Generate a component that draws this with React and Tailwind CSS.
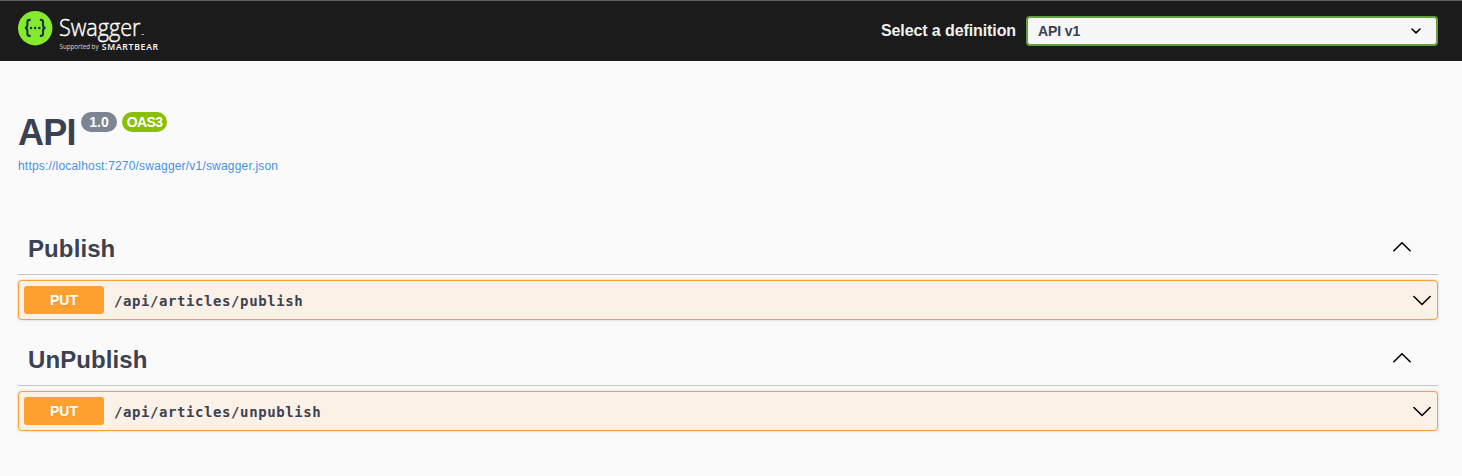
const groups = [
  { name: 'Publish', method: 'PUT', path: '/api/articles/publish' },
  { name: 'UnPublish', method: 'PUT', path: '/api/articles/unpublish' },
];

function Logo() {
  return (
    <svg width="150" height="44" viewBox="0 0 150 44" className="block">
      <circle cx="17.2" cy="18.2" r="17.2" fill="#85ea2d" />
      <g fill="none" stroke="#173647" strokeWidth="2.1">
        <path d="M12.6 9.9h-1q-2.2 0-2.2 2.2v3q0 2.6-2.4 2.8q2.4.2 2.4 2.8v3q0 2.2 2.2 2.2h1" />
        <path d="M21.8 9.9h1q2.2 0 2.2 2.2v3q0 2.6 2.4 2.8q-2.4.2-2.4 2.8v3q0 2.2-2.2 2.2h-1" />
      </g>
      <g fill="#173647">
        <circle cx="13" cy="17.9" r="1.25" />
        <circle cx="17.2" cy="17.9" r="1.25" />
        <circle cx="21.4" cy="17.9" r="1.25" />
      </g>
      <g fill="#fff" fontFamily="'Open Sans', sans-serif">
        <text x="41" y="25.8" fontSize="23" fontWeight="300" stroke="#fff" strokeWidth="0.4" textLength="81.5" lengthAdjust="spacingAndGlyphs">Swagger</text>
        <text x="41.5" y="39.4" fontSize="6.8" fill="#ddd" textLength="39" lengthAdjust="spacingAndGlyphs">Supported by</text>
        <text x="83.8" y="39.5" fontSize="8.6" fontWeight="600" textLength="57" lengthAdjust="spacingAndGlyphs" letterSpacing="0.7">SMARTBEAR</text>
      </g>
      <path d="M123.5 24.5h2.5" stroke="#aaa" strokeWidth="1" />
    </svg>
  );
}

function Chevron({ up }) {
  return (
    <svg width="20" height="20" viewBox="0 0 20 20" fill="none" stroke="#000" strokeWidth="1.6" strokeLinecap="round" className="block">
      <path d={up ? 'M1.9 13.8 10 5.8l8.1 8' : 'M1.9 6.5 10 14.5l8.1-8'} />
    </svg>
  );
}

function Group({ group }) {
  return (
    <section className="h-[111px]">
      <div className="flex h-[54px] items-start justify-between border-b border-[#c3c4c8] pt-[13px] pr-[26px] pl-2.5">
        <h2 className="text-[24px] leading-[30px] font-bold tracking-[0.1px]">{group.name}</h2>
        <div className="pt-[3px]">
          <Chevron up />
        </div>
      </div>
      <div className="mt-[5px] flex h-10 items-center rounded border border-[#fca130] bg-[#fbf1e6] pr-[5px] pl-[5px] shadow-[0_0_3px_rgba(0,0,0,0.19)]">
        <span className="flex h-7 w-20 items-center justify-center rounded-[3px] bg-[#fca130] text-[14px] font-bold text-white [text-shadow:0_1px_0_rgba(0,0,0,0.1)]">
          {group.method}
        </span>
        <span className="ml-2.5 grow pt-[3px] font-['DejaVu_Sans_Mono',monospace] text-[14px] font-bold tracking-[0.58px]">
          {group.path}
        </span>
        <Chevron />
      </div>
    </section>
  );
}

export default function App() {
  return (
    <div className="h-[476px] overflow-hidden bg-[#fafafa] font-['Liberation_Sans',Arial,sans-serif] text-[#3b4151]">
      <header className="flex h-[61px] items-start justify-between border-t border-[#5b5e62] bg-[#1b1b1b] pr-6 pl-[18px]">
        <div className="pt-[9px]">
          <Logo />
        </div>
        <div className="flex items-center pt-[15px]">
          <span className="mr-2.5 text-[16px] leading-5 font-bold tracking-[-0.1px] text-[#f0f0f0]">Select a definition</span>
          <div className="flex h-[30px] w-[412px] items-center justify-between rounded border-2 border-[#62a03f] bg-[#f7f7f7] pr-[14px] pl-[10px]">
            <span className="text-[14px] font-bold tracking-[-0.1px]">API v1</span>
            <svg width="12" height="8" viewBox="0 0 12 8" fill="none" stroke="#000" strokeWidth="1.6" strokeLinecap="round" className="block">
              <path d="m2 2 4 3.8L10 2" />
            </svg>
          </div>
        </div>
      </header>
      <main className="pr-6 pl-[18px]">
        <div className="h-[160px] pt-[50px]">
          <div className="flex items-start">
            <h1 className="w-[63px] text-[36px] leading-[43px] font-bold tracking-[-0.7px]">API</h1>
            <span className="mt-px flex h-5 w-9 items-center justify-center rounded-full bg-[#7d8492] text-[14px] font-bold text-white">1.0</span>
            <span className="mt-px ml-[5px] flex h-5 w-[45px] items-center justify-center rounded-full bg-[#89bf04] text-[14px] font-bold tracking-[-0.6px] text-white">OAS3</span>
          </div>
          <a className="block pt-1 text-[12px] leading-4 tracking-[0.19px] text-[#4990e2]">https://localhost:7270/swagger/v1/swagger.json</a>
        </div>
        {groups.map((g) => (
          <Group key={g.name} group={g} />
        ))}
      </main>
    </div>
  );
}
